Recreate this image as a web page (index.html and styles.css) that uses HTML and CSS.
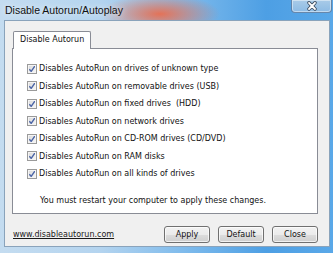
FILE: index.html
```html
<!DOCTYPE html>
<html lang="en">
<head>
    <meta charset="UTF-8">
    <title>Disable Autorun/Autoplay</title>
    <link rel="stylesheet" href="styles.css">
</head>
<body>
    <div class="window">
        <!-- Title bar with Aero glass -->
        <div class="titlebar">
            <span class="title">Disable Autorun/Autoplay</span>
            <button class="close-x" title="Close">
                <svg width="12" height="10" viewBox="0 0 12 10">
                    <path d="M3 1.8 L9 8 M9 1.8 L3 8" stroke="#3b4a5c" stroke-width="3.4" stroke-linecap="round"/>
                    <path d="M3 1.8 L9 8 M9 1.8 L3 8" stroke="#ffffff" stroke-width="1.8" stroke-linecap="round"/>
                </svg>
            </button>
        </div>

        <div class="client">
            <div class="tabs">
                <div class="tab active">Disable Autorun</div>
            </div>
            <div class="panel">
                <ul class="options">
                    <li><span class="check"></span>Disables AutoRun on drives of unknown type</li>
                    <li><span class="check"></span>Disables AutoRun on removable drives (USB)</li>
                    <li><span class="check"></span>Disables AutoRun on fixed drives &nbsp;(HDD)</li>
                    <li><span class="check"></span>Disables AutoRun on network drives</li>
                    <li><span class="check"></span>Disables AutoRun on CD-ROM drives (CD/DVD)</li>
                    <li><span class="check"></span>Disables AutoRun on RAM disks</li>
                    <li><span class="check"></span>Disables AutoRun on all kinds of drives</li>
                </ul>
                <p class="note">You must restart your computer to apply these changes.</p>
            </div>

            <div class="footer">
                <a class="site" href="#">www.disableautorun.com</a>
                <div class="buttons">
                    <button class="btn">Apply</button>
                    <button class="btn">Default</button>
                    <button class="btn">Close</button>
                </div>
            </div>
        </div>
    </div>
</body>
</html>
```

FILE: styles.css
```css
body {
    margin: 0;
    background: #6fb0e6;
    font-family: "DejaVu Sans", sans-serif;
    font-size: 8px;
    color: #111;
}
.window {
    width: 333px;
    height: 253px;
    box-sizing: border-box;
    padding: 0 3px 6px 4px;
    display: flex;
    flex-direction: column;
    background:
        radial-gradient(ellipse 60px 20px at 160px 14px, rgba(232, 110, 80, 0.95), rgba(232, 110, 80, 0) 100%),
        linear-gradient(90deg, #c4dcf0 0%, #b4d4ef 30%, #7fbbec 55%, #4d9fe4 80%, #5aa8e8 100%);
}
.titlebar {
    height: 20px;
    display: flex;
    justify-content: space-between;
    align-items: flex-start;
}
.title {
    font-family: "Liberation Sans", sans-serif;
    font-size: 10.5px;
    color: #111;
    margin: 4px 0 0 1px;
    text-shadow: 0 0 6px rgba(255, 255, 255, 0.9);
}
.close-x {
    width: 41px;
    height: 13px;
    margin-right: -2px;
    padding: 0;
    border: 1px solid rgba(50, 80, 120, 0.55);
    border-top: none;
    border-radius: 0 0 4px 4px;
    background: linear-gradient(#a9cbe8, #8dbbe4);
    box-shadow: inset 0 0 0 1px rgba(255, 255, 255, 0.45);
    display: flex;
    align-items: center;
    justify-content: center;
}
.client {
    flex: 1;
    background: #f0f0f0;
    border: 1px solid #8aa3bb;
    display: flex;
    flex-direction: column;
    padding: 10px 11px 0 7px;
}

/* tab control */
.tabs {
    display: flex;
    padding-left: 1px;
}
.tab {
    background: #fff;
    border: 1px solid #898c95;
    border-bottom: none;
    border-radius: 2px 2px 0 0;
    padding: 0 6px;
    height: 17px;
    line-height: 16px;
    margin-bottom: -1px;
    position: relative;
}
.panel {
    height: 166px;
    background: #fff;
    border: 1px solid #898c95;
    box-sizing: border-box;
}
.options {
    list-style: none;
    margin: 0;
    padding: 11px 0 0 14px;
}
.options li {
    height: 17.5px;
    display: flex;
    align-items: center;
}
.check {
    width: 10px;
    height: 10px;
    box-sizing: border-box;
    margin-right: 2px;
    border: 1px solid #9a9a9a;
    background:
        url("data:image/svg+xml,%3Csvg xmlns='http://www.w3.org/2000/svg' width='8' height='8' viewBox='0 0 8 8'%3E%3Cpath d='M1.3 4.3 L3.2 6.3 L6.8 1.2' fill='none' stroke='%234a64a6' stroke-width='1.4'/%3E%3C/svg%3E") center / 8px 8px no-repeat,
        linear-gradient(135deg, #d8d8d8, #f8f8f8);
    box-shadow: inset 0 0 0 1px #f4f4f4;
}
.note {
    margin: 13px 0 0 27px;
}

/* bottom row */
.footer {
    display: flex;
    justify-content: space-between;
    align-items: center;
    margin-top: 12px;
}
.site {
    color: #1a1a1a;
    text-decoration: underline;
    margin-left: 1px;
}
.buttons {
    display: flex;
    gap: 8px;
}
.btn {
    width: 46px;
    height: 17px;
    padding: 0;
    font: inherit;
    color: #111;
    border: 1px solid #707070;
    border-radius: 3px;
    background: linear-gradient(#f2f2f2 0%, #ebebeb 50%, #dddddd 51%, #cfcfcf 100%);
    box-shadow: inset 0 0 0 1px rgba(255, 255, 255, 0.7);
}
```
